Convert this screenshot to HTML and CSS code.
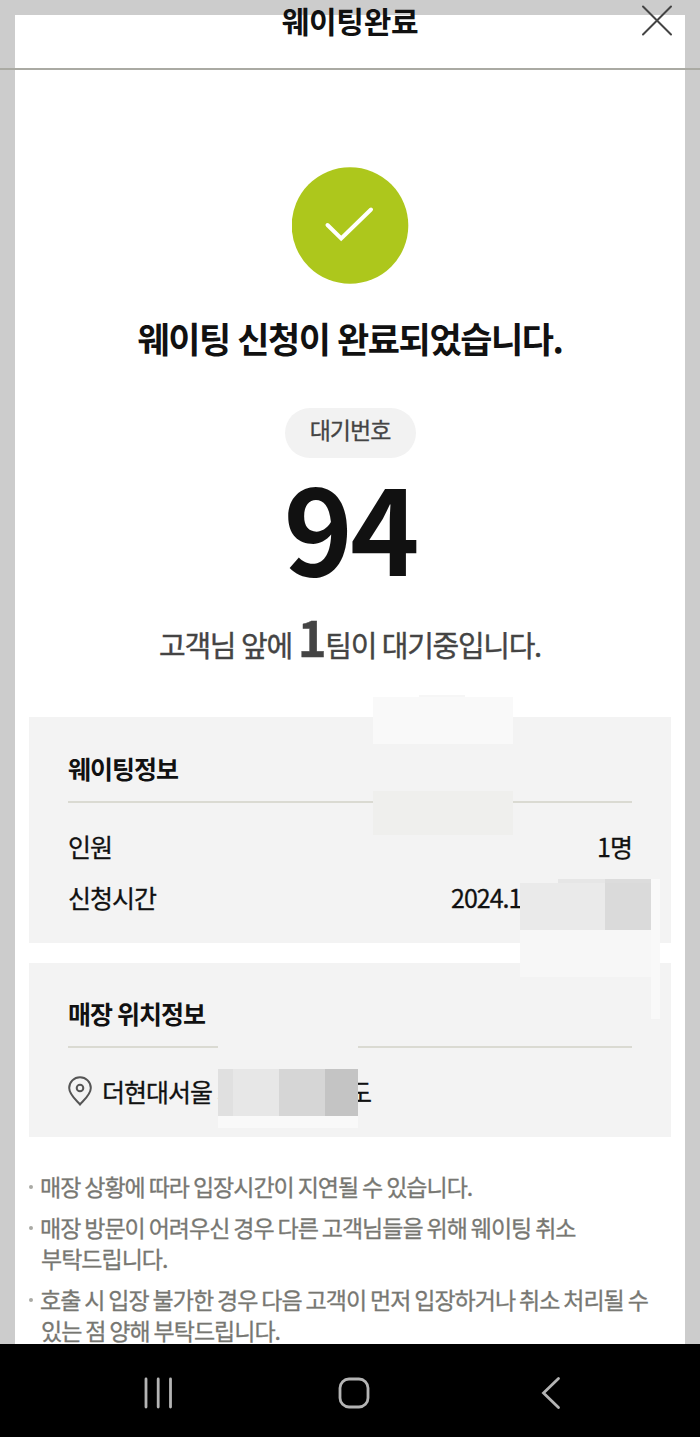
FILE: index.html
```html
<!DOCTYPE html>
<html lang="ko">
<head>
  <meta charset="UTF-8" />
  <meta name="viewport" content="width=device-width, initial-scale=1.0" />
  <title>웨이팅완료</title>
  <link rel="stylesheet" href="styles.css">
</head>
<body>
  <div class="screen">
    <header class="top-bar">
      <h1>웨이팅완료</h1>
      <svg class="close" viewBox="0 0 32 32"><path d="M2 1.5 30 29.5M30 1.5 2 29.5" /></svg>
    </header>

    <main class="sheet">
      <section class="result">
        <svg class="check" viewBox="0 0 117 117">
          <circle cx="58" cy="58.5" r="58.3" />
          <path d="M35.5 58 49.2 71.5 79 42.5" />
        </svg>
        <h2>웨이팅 신청이 완료되었습니다.</h2>
        <span class="badge">대기번호</span>
        <strong class="number">94</strong>
        <p class="ahead">고객님 앞에 <b>1</b>팀이 대기중입니다.</p>
      </section>

      <section class="card info">
        <h3>웨이팅정보</h3>
        <dl>
          <div class="row"><dt>인원</dt><dd>1명</dd></div>
          <div class="row"><dt>신청시간</dt><dd class="time">2024.1</dd></div>
        </dl>
        <!-- masked areas -->
        <i class="mask m1"></i>
        <i class="mask m2"></i>
        <i class="mask m3"></i>
        <i class="mask m4"></i>
        <i class="mask m5"></i>
        <i class="mask m6"></i>
        <i class="mask m7"></i>
        <i class="mask m8"></i>
      </section>

      <section class="card place">
        <h3>매장 위치정보</h3>
        <p class="location">
          <svg class="pin" viewBox="0 0 24 30">
            <path d="M12 28.5C8 24 1.2 18.5 1.2 12a10.8 10.8 0 0 1 21.6 0C22.8 18.5 16 24 12 28.5Z" />
            <circle cx="12" cy="12" r="3.3" />
          </svg>
          <span>더현대서울 지</span>
          <span class="floor">도</span>
        </p>
        <i class="mask gap"></i>
        <i class="mask blocks"></i>
        <i class="mask under"></i>
      </section>

      <ul class="notes">
        <li>매장 상황에 따라 입장시간이 지연될 수 있습니다.</li>
        <li>매장 방문이 어려우신 경우 다른 고객님들을 위해 웨이팅 취소<br><span>부탁드립니다.</span></li>
        <li>호출 시 입장 불가한 경우 다음 고객이 먼저 입장하거나 취소 처리될 수<br><span>있는 점 양해 부탁드립니다.</span></li>
      </ul>
    </main>

    <nav class="nav-bar">
      <svg viewBox="0 0 34 34"><path d="M5 3v28M17.2 3v28M29.5 3v28" /></svg>
      <svg viewBox="0 0 34 34"><rect x="3" y="3" width="28" height="28" rx="9" /></svg>
      <svg viewBox="0 0 34 34"><path d="M25.500 2.5 10.500 17l15 14.5" /></svg>
    </nav>
  </div>
</body>
</html>
```
FILE: styles.css
```css
* {
  box-sizing: border-box;
  margin: 0;
  padding: 0;
}
body {
  background: #ccc;
  font-family: "Noto Sans CJK KR", sans-serif;
  color: #111;
}
svg {
  fill: none;
  stroke-linecap: round;
}
.screen {
  position: relative;
  display: flex;
  flex-direction: column;
  height: 1437px;
  padding-top: 15px;
  overflow: hidden;
}
/* header lies over the grey edge and the sheet */
.top-bar {
  position: absolute;
  top: 0;
  left: 0;
  right: 0;
  height: 70px;
  border-bottom: 2px solid #aaaaa3;
  text-align: center;
}
.top-bar h1 {
  font-size: 30px;
  line-height: 40px;
  letter-spacing: -0.3px;
}
.close {
  position: absolute;
  top: 5px;
  right: 27px;
  width: 32px;
  height: 32px;
  stroke: #444;
  stroke-width: 2;
}
.sheet {
  flex: 1;
  min-height: 0;
  margin: 0 15px;
  padding: 152px 14px 0;
  background: #fff;
}
.result {
  display: flex;
  flex-direction: column;
  align-items: center;
  height: 550px;
}
.check {
  width: 117px;
  height: 117px;
}
.check circle {
  fill: #adc71c;
}
.check path {
  stroke: #fff;
  stroke-width: 4;
}
.result h2 {
  margin-top: 29px;
  font-size: 35px;
  line-height: 50px;
  letter-spacing: -1.4px;
  word-spacing: -1px;
}
.badge {
  margin-top: 45px;
  width: 131px;
  height: 50px;
  border-radius: 25px;
  background: #f2f2f2;
  color: #444;
  font-size: 23px;
  line-height: 43px;
  letter-spacing: -1px;
  text-align: center;
  -webkit-text-stroke: 0.3px;
}
.number {
  margin-top: 7px;
  font-size: 118px;
  line-height: 120px;
  letter-spacing: -3px;
}
.ahead {
  margin-top: 26px;
  color: #444;
  font-size: 29px;
  line-height: 60px;
  letter-spacing: -1.3px;
  word-spacing: -1px;
  white-space: nowrap;
  -webkit-text-stroke: 0.4px;
}
.ahead b {
  font-size: 49px;
  line-height: 1;
}
.card {
  position: relative;
  padding: 30px 39px 0;
  background: #f3f3f3;
  font-size: 25px;
  letter-spacing: -1px;
  word-spacing: -1px;
}
.info {
  height: 226px;
}
.place {
  height: 174px;
  margin-top: 20px;
  padding-top: 29px;
}
.card h3 {
  height: 56px;
  border-bottom: 2px solid #dadad2;
  font-size: 25px;
  line-height: 42px;
}
.info dl {
  padding-top: 18px;
}
.row {
  display: flex;
  justify-content: space-between;
  height: 51px;
  line-height: 51px;
  -webkit-text-stroke: 0.3px;
}
.row .time {
  width: 181px;
}
.location {
  display: flex;
  align-items: center;
  height: 50px;
  margin-top: 18px;
  line-height: 50px;
  -webkit-text-stroke: 0.3px;
}
.pin {
  width: 24px;
  height: 30px;
  margin-right: 10px;
  stroke: #555;
  stroke-width: 2;
}
.floor {
  margin-left: 110px;
}
.mask {
  position: absolute;
}
.m1 { left: 390px; top: -22px; width: 46px; height: 2px; background: #f6f6f6; }
.m2 { left: 344px; top: -20px; width: 140px; height: 47px; background: #f9f9f9; }
.m3 { left: 344px; top: 74px; width: 140px; height: 44px; background: #efefed; }
.m4 { left: 529px; top: 162px; width: 93px; height: 5px; background: linear-gradient(90deg, #e6e6e6 47px, #dcdcdc 47px); }
.m5 { left: 491px; top: 166px; width: 85px; height: 47px; background: #eaeaea; }
.m6 { left: 576px; top: 166px; width: 46px; height: 47px; background: #dadada; }
.m7 { left: 491px; top: 213px; width: 140px; height: 47px; background: #f7f7f7; z-index: 1; }
.m8 { left: 622px; top: 162px; width: 9px; height: 140px; background: #f9f9f9; z-index: 1; }
.gap { left: 189px; top: 80px; width: 140px; height: 10px; background: #f3f3f3; }
.blocks {
  left: 189px;
  top: 106px;
  width: 140px;
  height: 47px;
  background: linear-gradient(90deg, #e0e0e0 15px, #e7e7e7 15px, #e7e7e7 61px, #d6d6d6 61px, #d6d6d6 107px, #c4c4c4 107px);
}
.under { left: 189px; top: 153px; width: 140px; height: 12px; background: #f9f9f9; }
.notes {
  padding-top: 34px;
  list-style: none;
  color: #777772;
  font-size: 23px;
  line-height: 31px;
  letter-spacing: -1px;
  word-spacing: -1.5px;
  white-space: nowrap;
  -webkit-text-stroke: 0.3px;
}
.notes li {
  position: relative;
  margin-bottom: 10px;
  padding-left: 11px;
}
.notes li::before {
  content: "";
  position: absolute;
  left: 0;
  top: 14px;
  width: 4px;
  height: 4px;
  border-radius: 50%;
  background: #aaaaa5;
}
.notes li span {
  padding-left: 1px;
}
.nav-bar {
  display: flex;
  justify-content: space-between;
  flex: none;
  height: 93px;
  padding: 32px 133px 0 141px;
  background: #000;
}
.nav-bar svg {
  width: 34px;
  height: 34px;
  stroke: #b4b4b4;
  stroke-width: 2.8;
}
```
